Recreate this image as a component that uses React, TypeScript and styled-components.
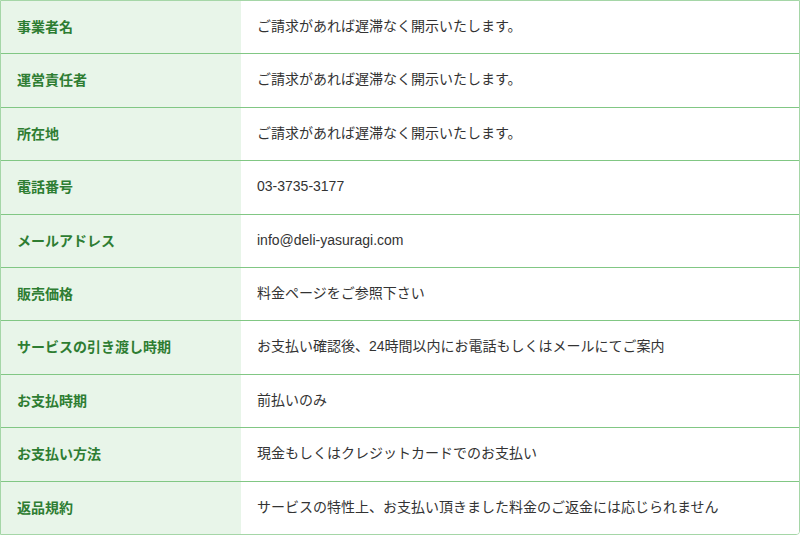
import React from "react";
import styled, { createGlobalStyle } from "styled-components";

const Global = createGlobalStyle`
  html, body { margin: 0; padding: 0; background: #ffffff; }
  body { font-family: "Liberation Sans", "Noto Sans CJK JP", sans-serif; }
`;

const Table = styled.div`
  width: 800px;
  box-sizing: border-box;
  border: 1px solid #a5d6a7;
  border-radius: 0 0 4px 0;
  overflow: hidden;
  display: grid;
  grid-template-columns: 240px 1fr;
`;

const Label = styled.div<{ $last?: boolean }>`
  background: #e8f5e9;
  color: #2e7d32;
  font-family: "Noto Sans CJK JP", sans-serif;
  font-weight: 700;
  font-size: 14px;
  line-height: 22.4px;
  padding: 14px 16px 16px;
  border-bottom: ${(p) => (p.$last ? "none" : "1px solid #81c784")};
`;

const Value = styled.div<{ $last?: boolean }>`
  background: #ffffff;
  color: #333333;
  font-family: "Liberation Sans", "Noto Sans CJK JP", sans-serif;
  font-size: 14px;
  line-height: 22.4px;
  padding: 14px 16px 16px;
  border-bottom: ${(p) => (p.$last ? "none" : "1px solid #81c784")};
`;

const rows: [string, string][] = [
  ["事業者名", "ご請求があれば遅滞なく開示いたします。"],
  ["運営責任者", "ご請求があれば遅滞なく開示いたします。"],
  ["所在地", "ご請求があれば遅滞なく開示いたします。"],
  ["電話番号", "03-3735-3177"],
  ["メールアドレス", "info@deli-yasuragi.com"],
  ["販売価格", "料金ページをご参照下さい"],
  ["サービスの引き渡し時期", "お支払い確認後、24時間以内にお電話もしくはメールにてご案内"],
  ["お支払時期", "前払いのみ"],
  ["お支払い方法", "現金もしくはクレジットカードでのお支払い"],
  ["返品規約", "サービスの特性上、お支払い頂きました料金のご返金には応じられません"],
];

export default function App() {
  return (
    <>
      <Global />
      <Table>
        {rows.map(([k, v], i) => {
          const last = i === rows.length - 1;
          return (
            <React.Fragment key={k}>
              <Label $last={last}>{k}</Label>
              <Value $last={last}>{v}</Value>
            </React.Fragment>
          );
        })}
      </Table>
    </>
  );
}
